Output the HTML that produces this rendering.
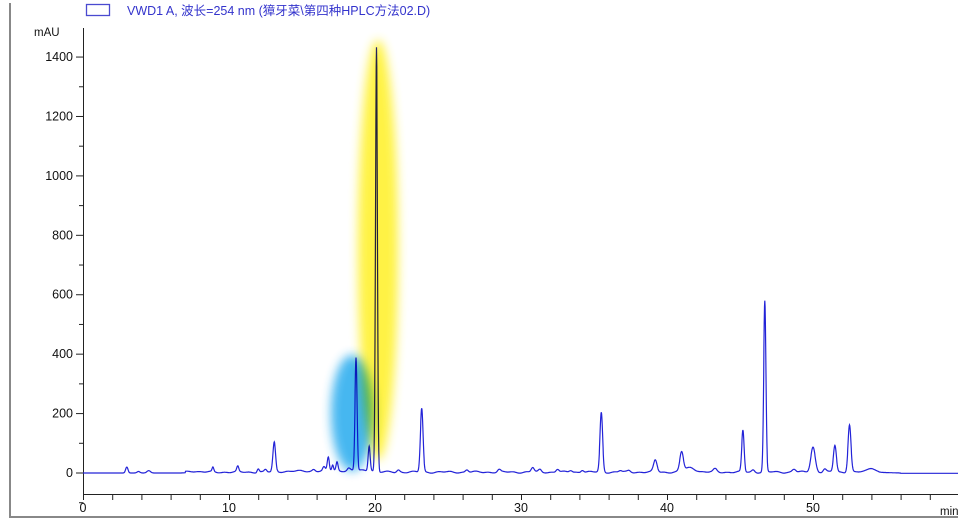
<!DOCTYPE html>
<html><head><meta charset="utf-8"><style>
html,body{margin:0;padding:0;background:#fff;width:958px;height:529px;overflow:hidden}
svg{display:block}
text{font-family:"Liberation Sans","Noto Sans CJK SC",sans-serif}
.blob{mix-blend-mode:multiply}
</style></head><body>
<svg width="958" height="529" viewBox="0 0 958 529" xmlns="http://www.w3.org/2000/svg">
<defs>
<filter id="b1" x="-50%" y="-50%" width="200%" height="200%"><feGaussianBlur stdDeviation="5"/></filter>
</defs>
<path d="M10 3 V517 H958" fill="none" stroke="#888" stroke-width="2"/>
<rect x="86.5" y="4.5" width="23" height="11" fill="none" stroke="#4a4ad0" stroke-width="1.3"/>
<text x="127" y="15" font-size="12.5" fill="#3333cc">VWD1 A, 波长=254 nm (獐牙菜\第四种HPLC方法02.D)</text>
<text x="34" y="36" font-size="11.5" fill="#111">mAU</text>
<g id="yax" stroke="#222" stroke-width="1"></g>
<g id="ylab" font-size="12.5" fill="#111" text-anchor="end"></g>
<g id="xax" stroke="#222" stroke-width="1"></g>
<g id="xlab" font-size="12.5" fill="#111" text-anchor="middle"></g>
<text x="940" y="515" font-size="11.5" fill="#111">min</text>
<path id="trace" fill="none" stroke="#2323d8" stroke-width="1.2"/>
<g class="blob"><ellipse cx="352" cy="413" rx="21" ry="58" fill="#3cb4f0" filter="url(#b1)" opacity="0.95"/></g>
<g class="blob"><ellipse cx="378" cy="250" rx="20" ry="210" fill="#fff23a" filter="url(#b1)" opacity="0.95"/></g>
</svg>
<script>
var NS="http://www.w3.org/2000/svg";
function el(p,t,a,txt){var e=document.createElementNS(NS,t);for(var k in a)e.setAttribute(k,a[k]);if(txt!=null)e.textContent=txt;document.getElementById(p).appendChild(e);}
var X=function(t){return 83+t*14.6};
var Y=function(v){return 473-v*0.2971};
el("yax","line",{x1:83.5,y1:28,x2:83.5,y2:494});
for(var v=-100;v<=1500;v+=100){var y=Y(v);if(y<28)continue;var maj=(v%200==0&&v>=0);
el("yax","line",{x1:maj?76:79,y1:y,x2:83.5,y2:y});
if(maj)el("ylab","text",{x:73,y:y+4},String(v));}
el("xax","line",{x1:83,y1:494.5,x2:958,y2:494.5});
for(var t=0;t<=60;t+=2){var x=X(t)+0.5;if(x>958)break;el("xax","line",{x1:x,y1:494.5,x2:x,y2:500});
if(t%10==0)el("xlab","text",{x:X(t),y:512},String(t));}
var P=[[3.0,20,.08],[3.8,5,.1],[4.5,8,.12],[7.5,4,.3],[8.9,15,.06],[10.6,18,.07],[12.0,12,.07],[12.5,8,.08],
[13.1,100,.09],[15.8,6,.1],[16.5,12,.08],[16.8,45,.07],[17.1,20,.06],[17.4,30,.07],[18.2,8,.1],[18.7,380,.07],[19.6,85,.07],[20.1,1430,.065],
[21.6,8,.1],[23.2,215,.09],[26.3,8,.1],[28.5,8,.1],[30.8,15,.1],[31.3,8,.1],[32.5,10,.1],[33.4,6,.1],[34.2,8,.1],
[35.5,200,.09],[36.8,5,.1],[37.4,5,.1],[39.2,40,.12],[41.0,65,.12],[41.6,15,.35],[43.3,10,.12],[45.2,140,.08],[45.9,8,.1],[46.7,575,.075],
[48.7,10,.12],[50.0,85,.15],[50.8,10,.1],[51.5,90,.1],[52.5,160,.1],[54.0,15,.25]];
var d="";
for(var t=0;t<=60.5;t+=0.02){var v=0;
if(t>7)v+=3+2*Math.sin(t*3.1)+1.5*Math.sin(t*7.3);
if(t>13.3&&t<20)v+=2+(t-13.3)*0.6;
if(t>54.5)v=(t<56?(56-t)*1.5:-1);
for(var i=0;i<P.length;i++){var p=P[i],z=(t-p[0])/p[2];if(Math.abs(z)<8)v+=p[1]*Math.exp(-0.5*z*z);}
d+=(d?"L":"M")+X(t).toFixed(1)+" "+Y(v).toFixed(1);}
document.getElementById("trace").setAttribute("d",d);
</script>
</body></html>
